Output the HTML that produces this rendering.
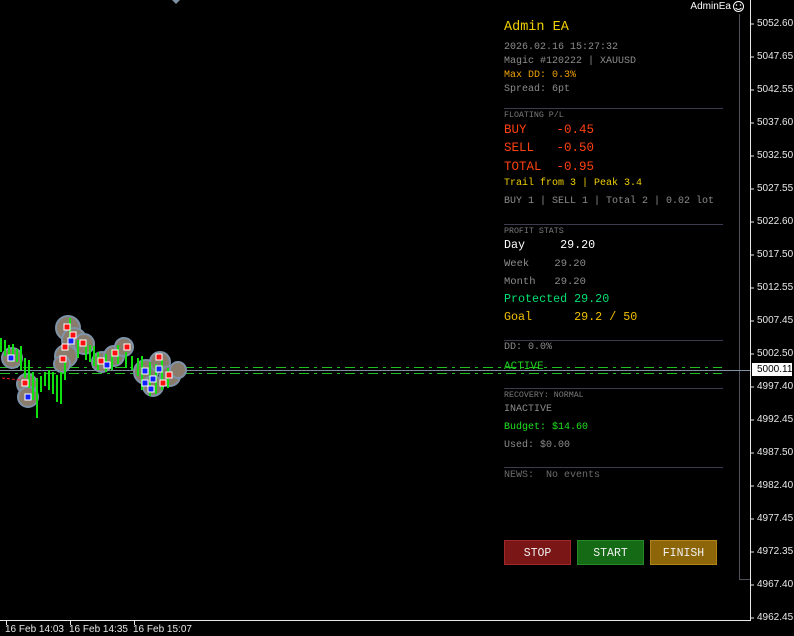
<!DOCTYPE html>
<html><head><meta charset="utf-8"><style>
html,body{margin:0;padding:0;background:#000;width:794px;height:636px;overflow:hidden;position:relative;font-family:"Liberation Mono",monospace}
.t{position:absolute;white-space:pre;line-height:1}
.ax{position:absolute;left:757px;font-family:"Liberation Sans",sans-serif;font-size:10px;color:#e8e8e8;white-space:pre;line-height:1}
.btn{position:absolute;top:540px;width:67px;height:25px;font-size:11.5px;color:#f0f0f0;text-align:center;line-height:25px;box-sizing:border-box}
.hr{position:absolute;left:504px;width:219px;height:1px;background:#3c3c50}
</style></head><body>
<svg width="794" height="636" style="position:absolute;left:0;top:0">
<line x1="750.5" y1="0" x2="750.5" y2="621" stroke="#e8e8e8" stroke-width="1"/>
<line x1="0" y1="620.5" x2="751" y2="620.5" stroke="#e8e8e8" stroke-width="1"/>
<g stroke="#e8e8e8">
<line x1="750" y1="24" x2="754" y2="24"/><line x1="750" y1="57" x2="754" y2="57"/><line x1="750" y1="90" x2="754" y2="90"/><line x1="750" y1="123" x2="754" y2="123"/><line x1="750" y1="156" x2="754" y2="156"/><line x1="750" y1="189" x2="754" y2="189"/><line x1="750" y1="222" x2="754" y2="222"/><line x1="750" y1="255" x2="754" y2="255"/><line x1="750" y1="288" x2="754" y2="288"/><line x1="750" y1="321" x2="754" y2="321"/><line x1="750" y1="354" x2="754" y2="354"/><line x1="750" y1="387" x2="754" y2="387"/><line x1="750" y1="420" x2="754" y2="420"/><line x1="750" y1="453" x2="754" y2="453"/><line x1="750" y1="486" x2="754" y2="486"/><line x1="750" y1="519" x2="754" y2="519"/><line x1="750" y1="552" x2="754" y2="552"/><line x1="750" y1="585" x2="754" y2="585"/><line x1="750" y1="618" x2="754" y2="618"/>
<line x1="6.5" y1="621" x2="6.5" y2="625"/><line x1="70.5" y1="621" x2="70.5" y2="625"/><line x1="134.5" y1="621" x2="134.5" y2="625"/>
</g>
<polyline points="739.5,14 739.5,579.5 750,579.5" fill="none" stroke="#50505c"/>
<line x1="0" y1="367.5" x2="722" y2="367.5" stroke="#22c022" stroke-dasharray="10,5,3,5"/>
<line x1="0" y1="373.5" x2="722" y2="373.5" stroke="#22c022" stroke-dasharray="10,5,3,5"/>
<line x1="0" y1="370.5" x2="750" y2="370.5" stroke="#8090a0"/>
<polygon points="172,0 180,0 176,4" fill="#8090a0"/>
<g fill="#8a7c6c" stroke="#7f93a8" stroke-width="2">
<circle cx="12" cy="358" r="10"/><circle cx="27" cy="384" r="10"/><circle cx="28" cy="397" r="10"/>
<circle cx="68" cy="328" r="12"/><circle cx="74" cy="340" r="12"/><circle cx="66" cy="356" r="11"/><circle cx="84" cy="344" r="10"/><circle cx="62" cy="364" r="8"/>
<circle cx="102" cy="362" r="10"/><circle cx="114" cy="356" r="10"/><circle cx="124" cy="347" r="9"/>
<circle cx="146" cy="372" r="12"/><circle cx="160" cy="362" r="10"/><circle cx="170" cy="376" r="10"/><circle cx="153" cy="386" r="10"/><circle cx="178" cy="370" r="8"/>
</g>
<g stroke="#10e010" stroke-width="2">
<line x1="1" y1="338" x2="1" y2="352"/><line x1="5" y1="340" x2="5" y2="356"/><line x1="9" y1="345" x2="9" y2="360"/><line x1="13" y1="344" x2="13" y2="362"/><line x1="17" y1="349" x2="17" y2="362"/><line x1="21" y1="346" x2="21" y2="370"/><line x1="25" y1="358" x2="25" y2="378"/><line x1="29" y1="360" x2="29" y2="388"/><line x1="33" y1="372" x2="33" y2="400"/><line x1="37" y1="378" x2="37" y2="418"/><line x1="41" y1="376" x2="41" y2="392"/><line x1="45" y1="372" x2="45" y2="386"/><line x1="49" y1="370" x2="49" y2="390"/><line x1="53" y1="372" x2="53" y2="394"/><line x1="57" y1="375" x2="57" y2="402"/><line x1="61" y1="372" x2="61" y2="404"/><line x1="65" y1="360" x2="65" y2="380"/><line x1="70" y1="318" x2="70" y2="338"/><line x1="78" y1="340" x2="78" y2="358"/><line x1="86" y1="342" x2="86" y2="360"/><line x1="90" y1="345" x2="90" y2="362"/><line x1="94" y1="346" x2="94" y2="366"/><line x1="98" y1="352" x2="98" y2="370"/><line x1="106" y1="354" x2="106" y2="372"/><line x1="112" y1="350" x2="112" y2="370"/><line x1="118" y1="345" x2="118" y2="364"/><line x1="126" y1="352" x2="126" y2="368"/><line x1="132" y1="356" x2="132" y2="370"/><line x1="138" y1="358" x2="138" y2="376"/><line x1="142" y1="356" x2="142" y2="390"/><line x1="150" y1="362" x2="150" y2="396"/><line x1="156" y1="364" x2="156" y2="394"/><line x1="162" y1="360" x2="162" y2="390"/><line x1="168" y1="368" x2="168" y2="388"/>
</g>
<g fill="#ff1010" stroke="#fff" stroke-width="1">
<rect x="22" y="380" width="6" height="6"/><rect x="64" y="324" width="6" height="6"/><rect x="70" y="332" width="6" height="6"/><rect x="62" y="344" width="6" height="6"/><rect x="80" y="340" width="6" height="6"/><rect x="60" y="356" width="6" height="6"/><rect x="112" y="350" width="6" height="6"/><rect x="124" y="344" width="6" height="6"/><rect x="98" y="358" width="6" height="6"/><rect x="156" y="354" width="6" height="6"/><rect x="166" y="372" width="6" height="6"/><rect x="160" y="380" width="6" height="6"/>
</g>
<g fill="#1020ff" stroke="#fff" stroke-width="1">
<rect x="8" y="355" width="6" height="6"/><rect x="25" y="394" width="6" height="6"/><rect x="68" y="338" width="6" height="6"/><rect x="104" y="362" width="6" height="6"/><rect x="142" y="368" width="6" height="6"/><rect x="150" y="376" width="6" height="6"/><rect x="142" y="380" width="6" height="6"/><rect x="156" y="366" width="6" height="6"/><rect x="148" y="386" width="6" height="6"/>
</g>
<line x1="2" y1="378" x2="20" y2="380" stroke="#ff2020" stroke-dasharray="3,2"/>
<circle cx="738.5" cy="6.5" r="5" fill="none" stroke="#fff"/>
<circle cx="736.5" cy="5" r="0.8" fill="#fff"/><circle cx="740.5" cy="5" r="0.8" fill="#fff"/>
<path d="M735.5 8 Q738.5 11 741.5 8" fill="none" stroke="#fff"/>
</svg>

<div class="t" style="right:63px;top:2px;font-family:'Liberation Sans',sans-serif;font-size:10px;color:#fff">AdminEa</div>

<div class="t" style="left:504px;top:21px;font-size:13.5px;color:#f0d000">Admin EA</div>
<div class="t" style="left:504px;top:43px;font-size:10px;color:#8c8c8c">2026.02.16 15:27:32</div>
<div class="t" style="left:504px;top:57px;font-size:10px;color:#8c8c8c">Magic #120222 | XAUUSD</div>
<div class="t" style="left:504px;top:71px;font-size:10px;color:#f0a000">Max DD: 0.3%</div>
<div class="t" style="left:504px;top:85px;font-size:10px;color:#8c8c8c">Spread: 6pt</div>
<div class="hr" style="top:108px"></div>
<div class="t" style="left:504px;top:112px;font-size:8.3px;color:#7a7a7a">FLOATING P/L</div>
<div class="t" style="left:504px;top:124px;font-size:12.5px;color:#ff4010">BUY    -0.45</div>
<div class="t" style="left:504px;top:142px;font-size:12.5px;color:#ff4010">SELL   -0.50</div>
<div class="t" style="left:504px;top:161px;font-size:12.5px;color:#ff4010">TOTAL  -0.95</div>
<div class="t" style="left:504px;top:179px;font-size:10px;color:#f0d000">Trail from 3 | Peak 3.4</div>
<div class="t" style="left:504px;top:197px;font-size:10px;color:#8c8c8c">BUY 1 | SELL 1 | Total 2 | 0.02 lot</div>
<div class="hr" style="top:224px"></div>
<div class="t" style="left:504px;top:228px;font-size:8.3px;color:#7a7a7a">PROFIT STATS</div>
<div class="t" style="left:504px;top:240px;font-size:11.7px;color:#fff">Day     29.20</div>
<div class="t" style="left:504px;top:259px;font-size:10.5px;color:#8c8c8c">Week    29.20</div>
<div class="t" style="left:504px;top:277px;font-size:10.5px;color:#8c8c8c">Month   29.20</div>
<div class="t" style="left:504px;top:294px;font-size:11.7px;color:#00e070">Protected 29.20</div>
<div class="t" style="left:504px;top:312px;font-size:11.7px;color:#f0c000">Goal      29.2 / 50</div>
<div class="hr" style="top:340px"></div>
<div class="t" style="left:504px;top:343px;font-size:10px;color:#8c8c8c">DD: 0.0%</div>
<div class="t" style="left:504px;top:362px;font-size:11px;color:#20d020">ACTIVE</div>
<div class="hr" style="top:388px"></div>
<div class="t" style="left:504px;top:392px;font-size:8.3px;color:#7a7a7a">RECOVERY: NORMAL</div>
<div class="t" style="left:504px;top:405px;font-size:10px;color:#8c8c8c">INACTIVE</div>
<div class="t" style="left:504px;top:423px;font-size:10px;color:#20e020">Budget: $14.60</div>
<div class="t" style="left:504px;top:441px;font-size:10px;color:#8c8c8c">Used: $0.00</div>
<div class="hr" style="top:467px"></div>
<div class="t" style="left:504px;top:471px;font-size:10px;color:#6c6c6c">NEWS:  No events</div>

<div class="btn" style="left:504px;background:#7a1616;border:1px solid #a02828">STOP</div>
<div class="btn" style="left:577px;background:#156a15;border:1px solid #258a25">START</div>
<div class="btn" style="left:650px;background:#8c6608;border:1px solid #b08418">FINISH</div>

<div class="ax" style="top:19px">5052.60</div>
<div class="ax" style="top:52px">5047.65</div>
<div class="ax" style="top:85px">5042.55</div>
<div class="ax" style="top:118px">5037.60</div>
<div class="ax" style="top:151px">5032.50</div>
<div class="ax" style="top:184px">5027.55</div>
<div class="ax" style="top:217px">5022.60</div>
<div class="ax" style="top:250px">5017.50</div>
<div class="ax" style="top:283px">5012.55</div>
<div class="ax" style="top:316px">5007.45</div>
<div class="ax" style="top:349px">5002.50</div>
<div class="ax" style="top:382px">4997.40</div>
<div class="ax" style="top:415px">4992.45</div>
<div class="ax" style="top:448px">4987.50</div>
<div class="ax" style="top:481px">4982.40</div>
<div class="ax" style="top:514px">4977.45</div>
<div class="ax" style="top:547px">4972.35</div>
<div class="ax" style="top:580px">4967.40</div>
<div class="ax" style="top:613px">4962.45</div>
<div style="position:absolute;left:752px;top:363px;width:40px;height:13px;background:#fff"></div>
<div class="ax" style="top:365px;color:#000">5000.11</div>

<div class="t" style="left:5px;top:625px;font-family:'Liberation Sans',sans-serif;font-size:10px;color:#e8e8e8">16 Feb 14:03</div>
<div class="t" style="left:69px;top:625px;font-family:'Liberation Sans',sans-serif;font-size:10px;color:#e8e8e8">16 Feb 14:35</div>
<div class="t" style="left:133px;top:625px;font-family:'Liberation Sans',sans-serif;font-size:10px;color:#e8e8e8">16 Feb 15:07</div>
</body></html>
